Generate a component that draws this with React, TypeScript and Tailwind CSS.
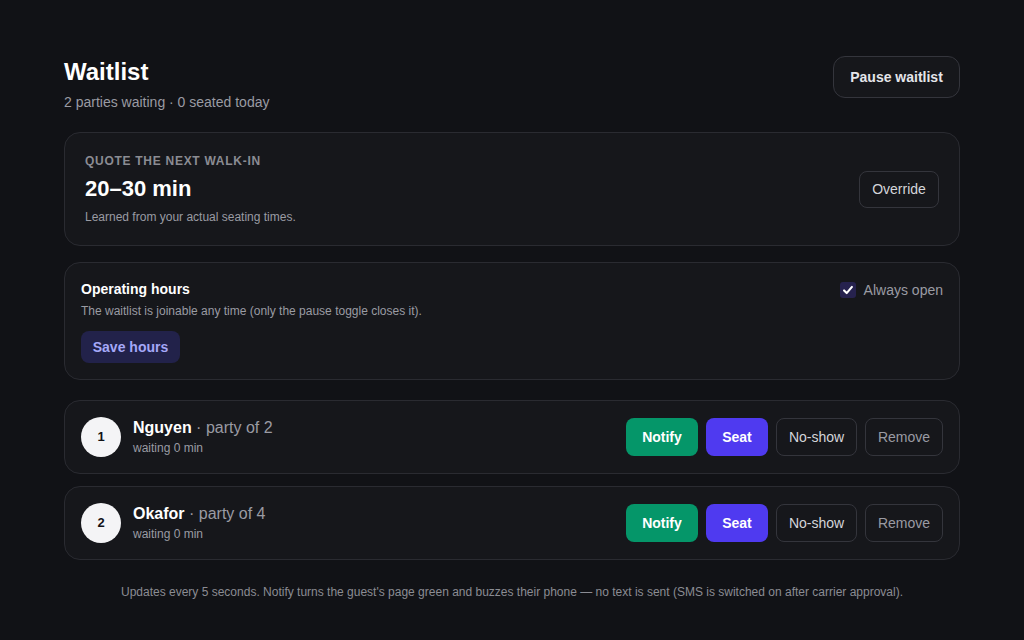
import React from 'react';

const parties = [
  { id: 1, name: 'Nguyen', size: 2, waiting: 0 },
  { id: 2, name: 'Okafor', size: 4, waiting: 0 },
];

const PartyRow = ({ id, name, size, waiting }: { id: number; name: string; size: number; waiting: number }) => (
  <div className="flex items-center justify-between rounded-2xl border border-[#2a2b31] bg-[#16171b] px-4 h-[74px]">
    <div className="flex items-center gap-3">
      <div className="flex h-10 w-10 items-center justify-center rounded-full bg-[#f4f4f6] text-[13px] font-bold text-[#111216]">
        {id}
      </div>
      <div>
        <div className="text-base leading-5">
          <span className="font-bold text-white">{name}</span>
          <span className="text-[#9a9ba3]"> · party of {size}</span>
        </div>
        <div className="mt-[2px] text-xs text-[#9a9ba3]">waiting {waiting} min</div>
      </div>
    </div>
    <div className="flex items-center gap-2">
      <button className="h-[38px] w-[72px] rounded-lg bg-[#059669] text-sm font-bold text-white">Notify</button>
      <button className="h-[38px] w-[62px] rounded-lg bg-[#4f3af0] text-sm font-bold text-white">Seat</button>
      <button className="h-[38px] w-[81px] rounded-lg border border-[#34353c] text-sm text-[#d4d5da]">No-show</button>
      <button className="h-[38px] w-[78px] rounded-lg border border-[#34353c] text-sm text-[#9a9ba3]">Remove</button>
    </div>
  </div>
);

export default function App() {
  return (
    <div className="min-h-screen bg-[#111216] font-['Liberation_Sans',Arial,sans-serif] text-white">
      <div className="mx-auto w-[896px] pt-[56px] pb-10">
        <div className="flex items-start justify-between">
          <div>
            <h1 className="text-2xl font-bold leading-8">Waitlist</h1>
            <p className="mt-1 text-sm leading-5 text-[#9a9ba3]">2 parties waiting · 0 seated today</p>
          </div>
          <button className="h-[42px] w-[127px] rounded-xl border border-[#34353c] bg-[#16171b] text-sm font-bold text-[#e4e5ea]">
            Pause waitlist
          </button>
        </div>

        <div className="mt-5 flex items-center justify-between rounded-2xl border border-[#2a2b31] bg-[#16171b] px-5 h-[114px]">
          <div>
            <div className="text-xs font-bold uppercase tracking-[0.06em] text-[#8b8c93]">Quote the next walk-in</div>
            <div className="mt-[6px] text-[22px] font-bold leading-7">20–30 min</div>
            <div className="mt-[6px] text-xs text-[#9a9ba3]">Learned from your actual seating times.</div>
          </div>
          <button className="h-[37px] w-[80px] rounded-lg border border-[#34353c] text-sm text-[#d4d5da]">Override</button>
        </div>

        <div className="mt-4 flex items-start justify-between rounded-2xl border border-[#2a2b31] bg-[#16171b] px-4 pt-4 h-[118px]">
          <div>
            <div className="text-sm font-bold">Operating hours</div>
            <div className="mt-[4px] text-xs text-[#9a9ba3]">The waitlist is joinable any time (only the pause toggle closes it).</div>
            <button className="mt-3 h-8 w-[99px] rounded-lg bg-[#22224a] text-sm font-bold text-[#a5a8f8]">Save hours</button>
          </div>
          <label className="mt-[1px] flex items-center gap-2 text-sm text-[#9a9ba3]">
            <span className="flex h-4 w-4 items-center justify-center rounded-[3px] bg-[#26224e]">
              <svg viewBox="0 0 16 16" className="h-[14px] w-[14px]" fill="none" stroke="white" strokeWidth="2.4" strokeLinecap="round" strokeLinejoin="round">
                <path d="M3.5 8.5l3 3 6-7" />
              </svg>
            </span>
            Always open
          </label>
        </div>

        <div className="mt-5 flex flex-col gap-3">
          {parties.map((p) => (
            <PartyRow key={p.id} {...p} />
          ))}
        </div>

        <p className="mt-6 text-center text-xs text-[#8b8c93]">
          Updates every 5 seconds. Notify turns the guest's page green and buzzes their phone — no text is sent (SMS is switched on after carrier approval).
        </p>
      </div>
    </div>
  );
}
